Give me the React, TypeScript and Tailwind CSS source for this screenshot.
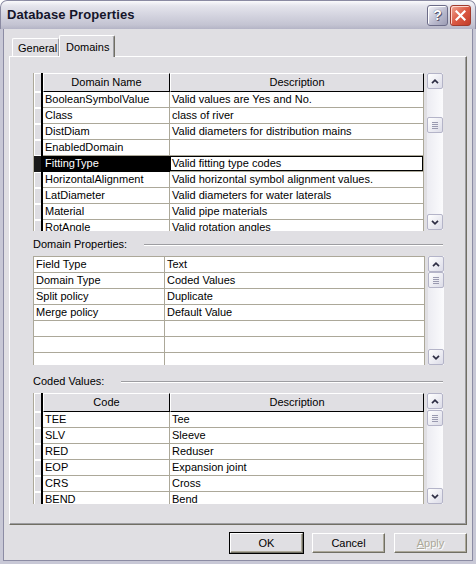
import React from "react";

const F = "font-['Liberation_Sans',Arial,sans-serif]";

function SBtn({ dir }: { dir: "up" | "down" }) {
  return (
    <div className="w-[16px] h-[16px] shrink-0 rounded-[2px] border border-[#b4b4c8] bg-[linear-gradient(135deg,#ffffff,#dcdce8)] flex items-center justify-center">
      <svg width="8" height="5" viewBox="0 0 8 5">
        {dir === "up" ? (
          <path d="M1 4.2 L4 1.2 L7 4.2" stroke="#2e2e44" strokeWidth="1.7" fill="none" />
        ) : (
          <path d="M1 0.8 L4 3.8 L7 0.8" stroke="#2e2e44" strokeWidth="1.7" fill="none" />
        )}
      </svg>
    </div>
  );
}

function Thumb() {
  return (
    <div className="w-[16px] h-[16px] shrink-0 rounded-[2px] border border-[#b4b4c8] bg-[linear-gradient(135deg,#ffffff,#dcdce8)] flex flex-col items-center justify-center gap-[1px]">
      <div className="w-[6px] h-[1px] bg-[#9a9ab0]" />
      <div className="w-[6px] h-[1px] bg-[#9a9ab0]" />
      <div className="w-[6px] h-[1px] bg-[#9a9ab0]" />
      <div className="w-[6px] h-[1px] bg-[#9a9ab0]" />
    </div>
  );
}

function Scroll({ h, gap }: { h: string; gap: string }) {
  return (
    <div className={`w-[16px] ${h} ml-[3px] flex flex-col bg-[linear-gradient(to_right,#ececf2,#fbfbfd)]`}>
      <SBtn dir="up" />
      <div className={gap}>
        <Thumb />
      </div>
      <div className="mt-auto">
        <SBtn dir="down" />
      </div>
    </div>
  );
}

function Sel({ h, sel }: { h: string; sel?: boolean }) {
  return (
    <div
      className={`w-[10px] ${h} shrink-0 border-l border-[#aca899] border-r-2 border-r-black ${
        sel ? "bg-[#1a1a1a]" : "bg-[#dedde2] shadow-[inset_1px_1px_0_#ffffff,inset_0_-1px_0_#ffffff]"
      }`}
    />
  );
}

const cell = "h-[16px] shrink-0 border-b border-r border-[#aca899] pl-[2px] leading-[15px] whitespace-nowrap overflow-hidden";
const head =
  "h-[19px] shrink-0 bg-[#e0dfe3] border-t border-l border-white border-r border-b border-r-black border-b-black text-center leading-[17px] whitespace-nowrap";

function SelGrid({
  header,
  rows,
  selected,
  h,
}: {
  header: [string, string];
  rows: [string, string][];
  selected?: number;
  h: string;
}) {
  return (
    <div className={`w-[391px] ${h} overflow-hidden bg-white flex flex-col`}>
      <div className="flex">
        <Sel h="h-[19px]" />
        <div className={`w-[127px] ${head}`}>{header[0]}</div>
        <div className={`w-[254px] ${head}`}>{header[1]}</div>
      </div>
      {rows.map((r, i) => (
        <div key={i} className="flex">
          <Sel h="h-[16px]" sel={i === selected} />
          <div className={`w-[127px] ${cell} ${i === selected ? "bg-black text-white border-black" : ""}`}>{r[0]}</div>
          <div className={`w-[254px] ${cell} ${i === selected ? "shadow-[inset_0_0_0_1px_#000]" : ""}`}>{r[1]}</div>
        </div>
      ))}
    </div>
  );
}

function Label({ text, pad }: { text: string; pad: string }) {
  return (
    <div className={`w-[410px] ${pad} flex items-center gap-[17px]`}>
      <span className="whitespace-nowrap leading-[13px]">{text}</span>
      <div className="flex-1 border-t border-[#9d9da1] border-b border-b-white" />
    </div>
  );
}

function Btn({ children, def, dis }: { children: React.ReactNode; def?: boolean; dis?: boolean }) {
  return (
    <div
      className={`w-[75px] h-[22px] flex items-center justify-center bg-[#e0dfe3] border ${
        def ? "border-black" : "border-transparent"
      }`}
    >
      <div className="w-full h-full flex items-center justify-center border-t border-l border-white border-r border-b border-r-[#716f64] border-b-[#716f64] shadow-[inset_-1px_-1px_0_#aca899]">
        {dis ? (
          <span className="text-[#aca899] [text-shadow:1px_1px_0_#ffffff]">
            <span className="underline">A</span>pply
          </span>
        ) : (
          children
        )}
      </div>
    </div>
  );
}

export default function App() {
  const domains: [string, string][] = [
    ["BooleanSymbolValue", "Valid values are Yes and No."],
    ["Class", "class of river"],
    ["DistDiam", "Valid diameters for distribution mains"],
    ["EnabledDomain", ""],
    ["FittingType", "Valid fitting type codes"],
    ["HorizontalAlignment", "Valid horizontal symbol alignment values."],
    ["LatDiameter", "Valid diameters for water laterals"],
    ["Material", "Valid pipe materials"],
    ["RotAngle", "Valid rotation angles"],
  ];
  const props: [string, string][] = [
    ["Field Type", "Text"],
    ["Domain Type", "Coded Values"],
    ["Split policy", "Duplicate"],
    ["Merge policy", "Default Value"],
    ["", ""],
    ["", ""],
    ["", ""],
  ];
  const codes: [string, string][] = [
    ["TEE", "Tee"],
    ["SLV", "Sleeve"],
    ["RED", "Reduser"],
    ["EOP", "Expansion joint"],
    ["CRS", "Cross"],
    ["BEND", "Bend"],
  ];
  return (
    <div className={`w-[476px] h-[564px] bg-[#c8c8d6] rounded-t-[7px] flex flex-col overflow-hidden ${F} text-[11px] text-black`}>
      {/* Title bar */}
      <div className="h-[29px] shrink-0 rounded-t-[7px] border-t border-x border-[#8a8aa2] bg-[linear-gradient(to_bottom,#fafafc_0%,#e4e4ec_18%,#d2d2de_55%,#c4c4d2_85%,#b4b4c6_100%)] flex items-center pl-[6px] pr-[4px]">
        <span className="text-[13px] font-bold text-[#15152a] tracking-[0.1px]">Database Properties</span>
        <div className="ml-auto flex gap-[2px]">
          <div className="w-[21px] h-[21px] rounded-[3px] border border-[#6c6c88] bg-[linear-gradient(135deg,#f6f6fa,#b8b8cc_60%,#9c9cb4)] flex items-center justify-center shadow-[inset_1px_1px_0_#ffffff]">
            <span className="text-[14px] font-bold text-white leading-none [text-shadow:0_0_1px_#404058,1px_1px_0_#5a5a74]">?</span>
          </div>
          <div className="w-[21px] h-[21px] rounded-[3px] border border-[#a03a2c] bg-[linear-gradient(135deg,#f0a896,#dc5a44_50%,#c23c28)] flex items-center justify-center shadow-[inset_1px_1px_0_#ffd8d0]">
            <svg width="11" height="11" viewBox="0 0 11 11">
              <path d="M1.5 1.5 L9.5 9.5 M9.5 1.5 L1.5 9.5" stroke="#ffffff" strokeWidth="2.2" strokeLinecap="square" />
            </svg>
          </div>
        </div>
      </div>
      {/* Body */}
      <div className="flex-1 mx-[3px] mb-[3px] border border-t-0 border-[#8c8ca4] bg-[#e0dfe3] flex flex-col">
        {/* Tabs */}
        <div className="mt-[6px] h-[21px] pl-[8px] flex items-end">
          <div className="w-[47px] h-[18px] border-t border-l border-white border-r border-r-[#9d9da1] rounded-t-[2px] flex items-center pl-[5px] pt-[1px]">
            General
          </div>
          <div className="w-[56px] h-[22px] -mb-px relative z-10 bg-[#e0dfe3] border-t border-l border-white border-r border-r-[#716f64] shadow-[inset_-1px_0_0_#9d9da1] rounded-t-[2px] flex items-start pl-[6px] pt-[3px]">
            Domains
          </div>
        </div>
        {/* Panel */}
        <div className="ml-[5px] w-[458px] h-[469px] border-t border-l border-white border-r border-b border-r-[#716f64] border-b-[#716f64] shadow-[inset_-1px_-1px_0_#9d9da1] pl-[23px] pt-[16px] flex flex-col">
          <div className="flex">
            <SelGrid header={["Domain Name", "Description"]} rows={domains} selected={4} h="h-[158px]" />
            <Scroll h="h-[157px]" gap="mt-[28px]" />
          </div>
          <Label text="Domain Properties:" pad="h-[25px] pt-[2px]" />
          <div className="flex">
            <div className="w-[392px] h-[109px] overflow-hidden bg-white border-t border-l border-[#aca899] flex flex-col">
              {props.map((r, i) => (
                <div key={i} className="flex">
                  <div className={`w-[131px] ${cell}`}>{r[0]}</div>
                  <div className={`w-[260px] ${cell}`}>{r[1]}</div>
                </div>
              ))}
            </div>
            <Scroll h="h-[109px]" gap="mt-0" />
          </div>
          <Label text="Coded Values:" pad="h-[28px] pt-[5px]" />
          <div className="flex">
            <SelGrid header={["Code", "Description"]} rows={codes} h="h-[111px]" />
            <Scroll h="h-[111px]" gap="mt-[1px]" />
          </div>
        </div>
        {/* Buttons */}
        <div className="mt-[7px] pr-[4px] flex justify-end gap-[7px]">
          <Btn def>OK</Btn>
          <Btn>Cancel</Btn>
          <Btn dis>Apply</Btn>
        </div>
      </div>
    </div>
  );
}
